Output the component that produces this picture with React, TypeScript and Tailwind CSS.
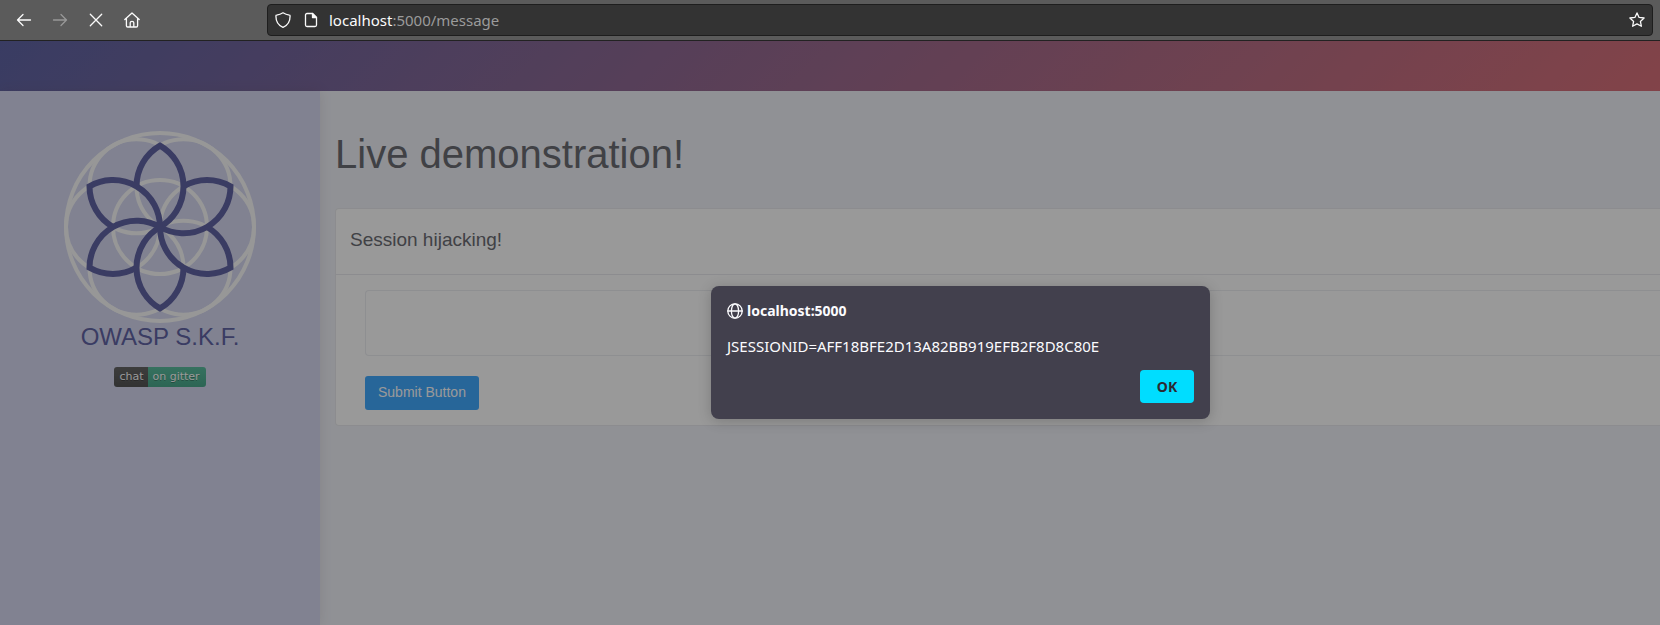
import React from "react";

const R = 47;
const ANGLES = [0, 60, 120, 180, 240, 300];

function point(angle: number, distance: number): [number, number] {
  const rad = (angle * Math.PI) / 180;
  return [96 + distance * Math.cos(rad), 96 - distance * Math.sin(rad)];
}

/* Each petal has one side running to the centre and one stopping halfway. */
function petal(angle: number) {
  const tip = point(angle, R * Math.sqrt(3));
  const half = point(angle + 30, R);
  return `M96 96 A${R} ${R} 0 0 0 ${tip[0]} ${tip[1]} A${R} ${R} 0 0 0 ${half[0]} ${half[1]}`;
}

function FlowerLogo() {
  return (
    <svg viewBox="0 0 192 192" className="size-48" fill="none" role="img" aria-label="OWASP S.K.F. logo">
      <g stroke="#fcfcfc" strokeWidth="4">
        <circle cx="96" cy="96" r="94" />
        <circle cx="96" cy="96" r={R} />
        {ANGLES.map((a) => {
          const [cx, cy] = point(a, R);
          return <circle key={a} cx={cx} cy={cy} r={R} />;
        })}
      </g>
      <g stroke="#6264a5" strokeWidth="6" strokeMiterlimit="10">
        {ANGLES.map((a) => (
          <path key={a} d={petal(a + 30)} />
        ))}
      </g>
    </svg>
  );
}

function Icon({ children, className = "" }: { children: React.ReactNode; className?: string }) {
  return (
    <svg
      viewBox="0 0 16 16"
      className={`size-4 shrink-0 ${className}`}
      fill="none"
      stroke="currentColor"
      strokeWidth="1.3"
      strokeLinecap="round"
      strokeLinejoin="round"
      aria-hidden="true"
    >
      {children}
    </svg>
  );
}

function Toolbar() {
  return (
    <header className="flex h-[41px] shrink-0 items-center border-b border-[#222222] bg-[#5b5b5b] pr-[7px] pl-4 text-[#fbfbfb]">
      <nav className="flex w-[251px] shrink-0 items-center gap-5" aria-label="Browser">
        <button type="button" aria-label="Back">
          <Icon>
            <path d="M14.5 8H1.5M7 2.5 1.5 8 7 13.5" />
          </Icon>
        </button>
        <button type="button" aria-label="Forward" disabled className="text-[#989898]">
          <Icon>
            <path d="M1.5 8h13M9 2.5 14.5 8 9 13.5" />
          </Icon>
        </button>
        <button type="button" aria-label="Stop">
          <Icon>
            <path d="m2.3 2.3 11.4 11.4M13.7 2.3 2.3 13.7" />
          </Icon>
        </button>
        <button type="button" aria-label="Home">
          <Icon>
            <path d="M.8 7.6 8 .9l7.2 6.7M2.4 6.3v7.4c0 .8.5 1.3 1.3 1.3h8.6c.8 0 1.3-.5 1.3-1.3V6.3M6.2 15v-4.2c0-.9.5-1.4 1.8-1.4s1.8.5 1.8 1.4V15" />
          </Icon>
        </button>
      </nav>
      <div className="flex h-8 grow items-center rounded border border-[#1e1e1e] bg-[#333333] px-[7px]">
        <Icon>
          <path d="M8 .8c2 1.3 4 2 6.4 2.3.5 0 .7.4.7.8 0 5.3-1.7 9.1-7.1 11.4C2.600 13 .9 9.200.9 3.900c0-.4.2-.8.7-.8C4 2.800 6 2.100 8 .8z" />
        </Icon>
        <Icon className="ml-3">
          <path d="M9.5 1.5H4A1.500 1.500 0 0 0 2.500 3v10A1.500 1.500 0 0 0 4 14.500h8a1.500 1.500 0 0 0 1.500-1.500V5.500z" />
          <path d="M9.500 1.500v4h4z" fill="currentColor" />
        </Icon>
        <div className="ml-[10px] grow font-['Noto_Sans',sans-serif] text-[15px] leading-5 text-[#9b9b9b]">
          <span className="text-[#fbfbfb]">localhost</span>:5000/message
        </div>
        <button type="button" aria-label="Bookmark this page">
          <Icon>
            <path d="m8 .9 2.100 4.500 5 .6-3.700 3.400 1 4.900L8 11.900l-4.400 2.400 1-4.900L.9 6l5-.6z" />
          </Icon>
        </button>
      </div>
    </header>
  );
}

function Sidebar() {
  return (
    <aside className="z-10 flex w-80 shrink-0 flex-col items-center bg-[#d7d9f2] pt-10 shadow-[0_0_12px_rgba(90,60,60,0.12)]">
      <FlowerLogo />
      <p className="text-2xl leading-7 text-[#6264a5]">OWASP S.K.F.</p>
      <a
        href="#gitter"
        className="mt-4 flex h-5 overflow-hidden rounded-[3px] font-['DejaVu_Sans',sans-serif] text-[11px] leading-5 text-white [text-shadow:0_1px_0_rgba(1,1,1,0.3)]"
      >
        <span className="bg-linear-to-b from-[#666666] to-[#555555] px-[5px]">chat</span>
        <span className="bg-linear-to-b from-[#5bbd9f] to-[#4ba98c] pr-1.5 pl-1">on gitter</span>
      </a>
    </aside>
  );
}

function AlertDialog() {
  return (
    <div
      role="alertdialog"
      aria-labelledby="alert-title"
      aria-describedby="alert-text"
      className="absolute top-[245px] left-[711px] z-30 flex w-[499px] flex-col rounded-lg bg-[#42404d] p-4 font-['Noto_Sans',sans-serif] text-[#fbfbfe] shadow-[0_2px_14px_rgba(0,0,0,0.2)]"
    >
      <h2 id="alert-title" className="flex items-center gap-1 text-sm leading-[18px] font-bold">
        <Icon>
          <circle cx="8" cy="8" r="7.2" />
          <ellipse cx="8" cy="8" rx="3.6" ry="7.2" />
          <path d="M.8 8h14.4" />
        </Icon>
        localhost:5000
      </h2>
      <p id="alert-text" className="mt-4 text-[15px] leading-5">
        JSESSIONID=AFF18BFE2D13A82BB919EFB2F8D8C80E
      </p>
      <button
        type="button"
        className="mt-[14px] h-[33px] w-[54px] self-end rounded bg-[#00ddff] text-sm font-bold text-[#2b2a33]"
      >
        OK
      </button>
    </div>
  );
}

export default function App() {
  return (
    <div className="flex min-h-screen flex-col font-['Liberation_Sans',sans-serif]">
      <Toolbar />
      <div className="relative flex grow flex-col overflow-hidden">
        <div className="h-[50px] shrink-0 bg-linear-[135deg,#6065a5,#d9717a]" />
        <div className="flex grow">
          <Sidebar />
          <main className="grow bg-[#f0f2f9] pt-[39px] pl-[15px] text-[#6c6d74]">
            <h1 className="text-[40px] leading-12">Live demonstration!</h1>
            <section className="mt-[30px] rounded-l border border-r-0 border-[#e9eaee] bg-white">
              <h2 className="border-b border-[#e9eaee] px-[14px] pt-[19px] pb-[22px] text-[19px] leading-6">
                Session hijacking!
              </h2>
              <form className="flex flex-col items-start py-[15px] pl-[29px]" onSubmit={(e) => e.preventDefault()}>
                <textarea
                  aria-label="Message"
                  className="h-[66px] w-full resize-none rounded-l border border-r-0 border-[#edeef2] bg-white p-2"
                />
                <button
                  type="submit"
                  className="mt-5 h-[34px] rounded-[3px] bg-[#42aaff] px-[13px] pb-0.5 text-sm text-white"
                >
                  Submit Button
                </button>
              </form>
            </section>
          </main>
        </div>
        <div className="absolute inset-0 z-20 bg-black/40" />
        <AlertDialog />
      </div>
    </div>
  );
}
